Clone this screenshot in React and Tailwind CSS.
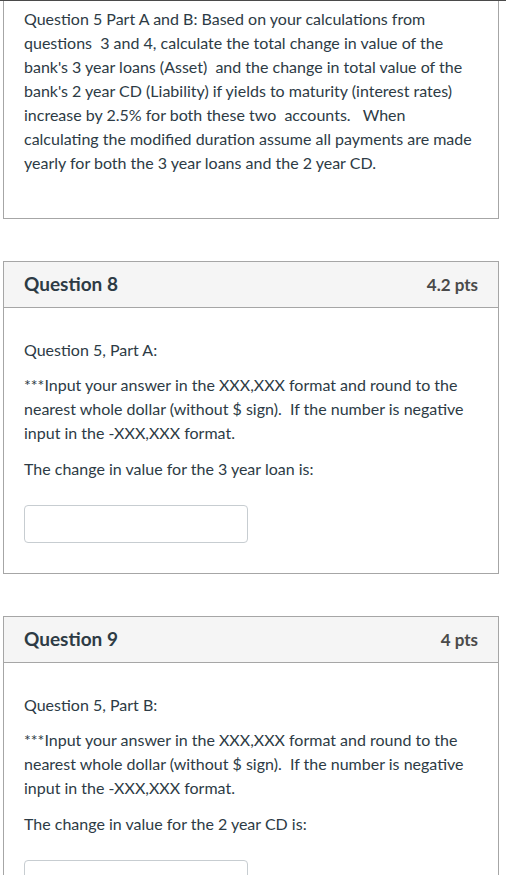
export default function App() {
  const font = { fontFamily: "Lato, 'Liberation Sans', sans-serif" };
  return (
    <div className="min-h-screen bg-white text-[#2d3b45]" style={font}>
      <div className="h-px bg-[#4a4a4a]" />
      {/* Tail of previous question */}
      <div className="ml-[3px] w-[496px] h-[218px] border-x border-b border-[#a6a6a6] px-5 pt-[6px] text-[16px] leading-6">
        <p>
          Question 5 Part A and B: Based on your calculations from questions&nbsp; 3 and 4, calculate the total
          change in value of the bank's 3 year loans (Asset)&nbsp; and the change in total value of the bank's 2 year
          CD (Liability) if yields to maturity (interest rates) increase by 2.5% for both these two&nbsp; accounts.&nbsp;
          &nbsp;When calculating the modified duration assume all payments are made yearly for both the 3 year loans
          and the 2 year CD.
        </p>
      </div>

      <QuestionCard
        title="Question 8"
        pts="4.2 pts"
        part="Question 5, Part A:"
        label="The change in value for the 3 year loan is:"
      />
      <QuestionCard
        title="Question 9"
        pts="4 pts"
        part="Question 5, Part B:"
        label="The change in value for the 2 year CD is:"
      />
    </div>
  );
}

function QuestionCard({ title, pts, part, label }) {
  return (
    <div className="ml-[3px] w-[496px] mt-[42px] border border-[#a6a6a6]">
      <div className="h-[46px] bg-[#f5f5f5] border-b border-[#a6a6a6] px-5 flex items-center justify-between">
        <h2 className="text-[19px] font-bold">{title}</h2>
        <span className="text-[17px] font-bold text-[#4a4a4a]">{pts}</span>
      </div>
      <div className="px-5 pt-[30px] pb-[30px] text-[16px] leading-6">
        <p>{part}</p>
        <p className="mt-[11px]">
          ***Input your answer in the XXX,XXX format and round to the nearest whole dollar (without $ sign).&nbsp; If
          the number is negative input in the -XXX,XXX format.
        </p>
        <p className="mt-[12px]">{label}</p>
        <input
          type="text"
          className="block mt-[24px] w-[224px] h-[38px] border border-[#c7cdd1] rounded-[4px]"
        />
      </div>
    </div>
  );
}
